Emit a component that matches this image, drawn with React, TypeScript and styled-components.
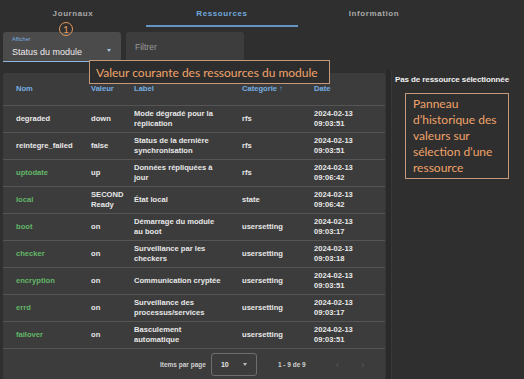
import React from "react";
import styled, { createGlobalStyle } from "styled-components";

const Global = createGlobalStyle`
  html, body { margin: 0; padding: 0; background: #2f2f2f; }
  body { font-family: "Liberation Sans", Arial, sans-serif; }
  * { box-sizing: border-box; }
`;

const Page = styled.div`
  position: relative;
  width: 524px;
  height: 379px;
  overflow: hidden;
  background: #2f2f2f;
  display: flex;
  flex-direction: column;
`;

const Tabs = styled.div`
  display: grid;
  grid-template-columns: 146px 152px 152px;
  height: 27px;
`;

const Tab = styled.div<{ $active?: boolean }>`
  display: flex;
  align-items: center;
  justify-content: center;
  padding-top: 2px;
  font-size: 8px;
  font-weight: bold;
  letter-spacing: 0.6px;
  color: ${(p) => (p.$active ? "#72a9dc" : "#a9a9a9")};
  border-bottom: 2px solid ${(p) => (p.$active ? "#6494c2" : "transparent")};
`;

const Controls = styled.div`
  display: flex;
  gap: 5px;
  padding: 5px 0 0 3px;
  height: 46px;
`;

const SelectField = styled.div`
  width: 118px;
  height: 30px;
  background: #4b4b4b;
  border-radius: 3px 3px 0 0;
  border-bottom: 1px solid #8fb6dd;
  padding: 4px 9px 0 9px;
  display: flex;
  flex-direction: column;
  position: relative;
`;

const FieldLabel = styled.div`
  font-size: 5.5px;
  color: #7aaee0;
  line-height: 7px;
`;

const FieldValue = styled.div`
  font-size: 9px;
  color: #ececec;
  margin-top: 4px;
  display: flex;
  justify-content: space-between;
  align-items: center;
`;

const Caret = styled.span`
  width: 0;
  height: 0;
  border-left: 2.5px solid transparent;
  border-right: 2.5px solid transparent;
  border-top: 3px solid #a6c3df;
  margin-right: 1px;
  margin-top: -3px;
`;

const FilterField = styled.div`
  width: 118px;
  height: 30px;
  background: #3d3d3d;
  border-radius: 3px 3px 0 0;
  border-bottom: 1px solid #6a6a6a;
  padding: 0 9px;
  display: flex;
  align-items: center;
  font-size: 8.5px;
  color: #9a9a9a;
`;

const Body = styled.div`
  display: flex;
  flex: 1;
`;

const Card = styled.div`
  margin-left: 3px;
  width: 382px;
  background: #3c3c3c;
  border-radius: 2px 2px 0 0;
  display: flex;
  flex-direction: column;
`;

const Row = styled.div<{ $head?: boolean }>`
  display: grid;
  grid-template-columns: 75px 43px 108px 72px 1fr;
  align-items: center;
  padding-left: 13px;
  height: ${(p) => (p.$head ? "33px" : "27px")};
  border-bottom: 1px solid #555555;
  font-size: 7.6px;
  font-weight: bold;
  line-height: 10px;
  color: #e6e6e6;
`;

const HeadCell = styled.div`
  color: #74aee2;
  font-weight: bold;
`;

const Cell = styled.div<{ $green?: boolean; $wrap?: boolean }>`
  color: ${(p) => (p.$green ? "#62b768" : "#e8e8e8")};
  padding-right: ${(p) => (p.$wrap ? "20px" : "0")};
`;

const Pager = styled.div`
  display: flex;
  align-items: center;
  height: 30px;
  padding-left: 157px;
  font-size: 6.5px;
  font-weight: bold;
  color: #d0d0d0;
`;

const PageSelect = styled.div`
  margin-left: 5px;
  width: 46px;
  height: 23px;
  border: 1px solid #6e6e6e;
  border-radius: 3px;
  display: flex;
  align-items: center;
  justify-content: space-between;
  padding: 0 9px 0 9px;
  font-size: 7px;
  color: #e6e6e6;
`;

const SmallCaret = styled.span`
  width: 0;
  height: 0;
  border-left: 2.5px solid transparent;
  border-right: 2.5px solid transparent;
  border-top: 3px solid #bdbdbd;
`;

const Range = styled.div`
  margin-left: 21px;
`;

const Chevron = styled.div<{ $gap: number }>`
  margin-left: ${(p) => p.$gap}px;
  color: #5b5b5b;
  font-size: 10px;
  font-weight: normal;
`;

const Divider = styled.div`
  width: 7px;
  margin-top: -3px;
  background: #2a2a2a;
  border-left: 1px solid #353535;
  border-right: 1px solid #383838;
`;

const Side = styled.div`
  flex: 1;
  padding: 2px 0 0 3px;
  display: flex;
  flex-direction: column;
`;

const SideTitle = styled.div`
  font-size: 8px;
  font-weight: bold;
  color: #f0f0f0;
  letter-spacing: -0.1px;
`;

const NoteBox = styled.div`
  margin: 9px 0 0 10px;
  width: 104px;
  height: 86px;
  border: 1px solid #c49a7a;
  padding: 2px 0 0 7px;
  font-family: Lato, "Open Sans", sans-serif;
  font-size: 12px;
  line-height: 16px;
  color: #f0a36a;
`;

const Callout = styled.div`
  position: absolute;
  left: 89px;
  top: 60px;
  width: 241px;
  height: 24px;
  background: #2d2d2d;
  border: 1px solid #c49a7a;
  display: flex;
  align-items: center;
  padding-left: 6px;
  font-family: Lato, "Open Sans", sans-serif;
  font-size: 12px;
  color: #f0a36a;
`;

const Badge = styled.div`
  position: absolute;
  left: 59px;
  top: 22px;
  width: 14px;
  height: 14px;
  border: 1px solid #e59a5e;
  border-radius: 50%;
  display: flex;
  align-items: center;
  justify-content: center;
  font-family: Lato, "Open Sans", sans-serif;
  font-size: 10px;
  color: #e59a5e;
`;

type R = { n: string; v: string; l: string; c: string; d: string; t: string; g: boolean };

const rows: R[] = [
  { n: "degraded", v: "down", l: "Mode dégradé pour la réplication", c: "rfs", d: "2024-02-13", t: "09:03:51", g: false },
  { n: "reintegre_failed", v: "false", l: "Status de la dernière synchronisation", c: "rfs", d: "2024-02-13", t: "09:03:51", g: false },
  { n: "uptodate", v: "up", l: "Données répliquées à jour", c: "rfs", d: "2024-02-13", t: "09:06:42", g: true },
  { n: "local", v: "SECOND Ready", l: "État local", c: "state", d: "2024-02-13", t: "09:06:42", g: true },
  { n: "boot", v: "on", l: "Démarrage du module au boot", c: "usersetting", d: "2024-02-13", t: "09:03:17", g: true },
  { n: "checker", v: "on", l: "Surveillance par les checkers", c: "usersetting", d: "2024-02-13", t: "09:03:18", g: true },
  { n: "encryption", v: "on", l: "Communication cryptée", c: "usersetting", d: "2024-02-13", t: "09:03:51", g: true },
  { n: "errd", v: "on", l: "Surveillance des processus/services", c: "usersetting", d: "2024-02-13", t: "09:03:17", g: true },
  { n: "failover", v: "on", l: "Basculement automatique", c: "usersetting", d: "2024-02-13", t: "09:03:51", g: true },
];

export default function App() {
  return (
    <Page>
      <Global />
      <Tabs>
        <Tab>Journaux</Tab>
        <Tab $active>Ressources</Tab>
        <Tab>Information</Tab>
      </Tabs>
      <Controls>
        <SelectField>
          <FieldLabel>Afficher</FieldLabel>
          <FieldValue>
            <span>Status du module</span>
            <Caret />
          </FieldValue>
        </SelectField>
        <FilterField>Filtrer</FilterField>
      </Controls>
      <Body>
        <Card>
          <Row $head>
            <HeadCell>Nom</HeadCell>
            <HeadCell>Valeur</HeadCell>
            <HeadCell>Label</HeadCell>
            <HeadCell>Categorie ↑</HeadCell>
            <HeadCell>Date</HeadCell>
          </Row>
          {rows.map((r) => (
            <Row key={r.n}>
              <Cell $green={r.g}>{r.n}</Cell>
              <Cell>{r.v}</Cell>
              <Cell $wrap>{r.l}</Cell>
              <Cell>{r.c}</Cell>
              <Cell>
                {r.d}
                <br />
                {r.t}
              </Cell>
            </Row>
          ))}
          <Pager>
            <span>Items par page</span>
            <PageSelect>
              <span>10</span>
              <SmallCaret />
            </PageSelect>
            <Range>1 - 9 de 9</Range>
            <Chevron $gap={30}>‹</Chevron>
            <Chevron $gap={22}>›</Chevron>
          </Pager>
        </Card>
        <Divider />
        <Side>
          <SideTitle>Pas de ressource sélectionnée</SideTitle>
          <NoteBox>Panneau d’historique des valeurs sur sélection d’une ressource</NoteBox>
        </Side>
      </Body>
      <Callout>Valeur courante des ressources du module</Callout>
      <Badge>1</Badge>
    </Page>
  );
}
